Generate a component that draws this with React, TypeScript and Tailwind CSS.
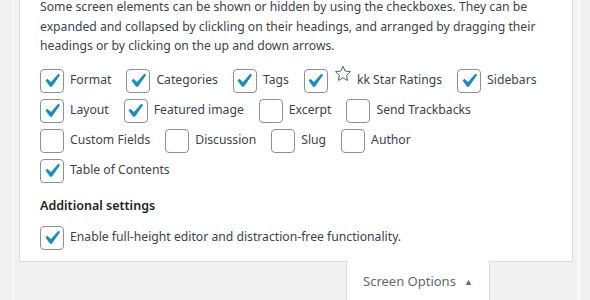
import React from "react";

type Item = { label: string; checked?: boolean; star?: boolean };

const rows: Item[][] = [
  [
    { label: "Format", checked: true },
    { label: "Categories", checked: true },
    { label: "Tags", checked: true },
    { label: "kk Star Ratings", checked: true, star: true },
    { label: "Sidebars", checked: true },
  ],
  [
    { label: "Layout", checked: true },
    { label: "Featured image", checked: true },
    { label: "Excerpt" },
    { label: "Send Trackbacks" },
  ],
  [{ label: "Custom Fields" }, { label: "Discussion" }, { label: "Slug" }, { label: "Author" }],
  [{ label: "Table of Contents", checked: true }],
];

const Checkbox = ({ checked }: { checked?: boolean }) => (
  <span className="flex h-[24px] w-[24px] shrink-0 items-center justify-center rounded-[4px] border border-[#8c8f94] bg-white">
    {checked && (
      <svg viewBox="4 3 13.5 13.5" className="h-[19px] w-[19px]">
        <path d="M14.83 4.89l1.34.94-5.81 8.38H9.02L5.78 9.67l1.34-1.25 2.57 2.4z" fill="#1e8cbe" />
      </svg>
    )}
  </span>
);

const Star = () => (
  <svg viewBox="0 0 24 24" className="mr-[5px] h-[18px] w-[18px] -translate-y-[6px]" fill="none" stroke="#50575e" strokeWidth="1.3" strokeLinejoin="round">
    <path d="M12 1.8l3 6.3 6.9.85-5.1 4.75 1.3 6.85L12 17.2l-6.1 3.35 1.3-6.85-5.1-4.75 6.9-.85z" />
  </svg>
);

export default function App() {
  return (
    <div
      className="flex h-[300px] w-[590px] overflow-hidden bg-[#f1f1f1] text-[12.2px] text-[#3c434a]"
      style={{ fontFamily: '"Segoe UI", "Noto Sans", sans-serif' }}
    >
      <div className="flex w-[19px] shrink-0">
        <div className="ml-[12px] w-[2px] bg-[#f7f7f7]" />
      </div>

      <div className="flex w-[554px] shrink-0 flex-col">
        <div className="border-x border-b border-[#dcdcde] bg-white px-[20px] pb-[11px]">
          <p className="-mt-[3px] leading-[19.5px]">
            <span className="block whitespace-nowrap">Some screen elements can be shown or hidden by using the checkboxes. They can be</span>
            <span className="block whitespace-nowrap">expanded and collapsed by clickling on their headings, and arranged by dragging their</span>
            <span className="block whitespace-nowrap">headings or by clicking on the up and down arrows.</span>
          </p>

          <div className="mt-[13px] flex flex-col gap-[6px]">
            {rows.map((row, i) => (
              <div key={i} className="flex gap-x-[15px]">
                {row.map((it) => (
                  <label key={it.label} className="flex items-center gap-[6px] whitespace-nowrap">
                    <Checkbox checked={it.checked} />
                    <span className="flex items-center">
                      {it.star && <Star />}
                      {it.label}
                    </span>
                  </label>
                ))}
              </div>
            ))}
          </div>

          <h5 className="mt-[12px] text-[12.5px] font-semibold leading-[21px] text-[#1d2327]">Additional settings</h5>
          <label className="mt-[10px] flex items-center gap-[6px]">
            <Checkbox checked />
            <span>Enable full-height editor and distraction-free functionality.</span>
          </label>
        </div>

        <div className="-mt-px ml-[327px] flex h-[40px] w-[144px] items-center border-x border-[#dcdcde] bg-white pl-[16px] pt-[2px] text-[13px] text-[#646970]">
          <span>Screen Options</span>
          <span className="ml-[8px] text-[9px]">▲</span>
        </div>
      </div>

      <div className="flex flex-1">
        <div className="ml-[4px] w-[4px] bg-[#f7f7f7]" />
      </div>
    </div>
  );
}
